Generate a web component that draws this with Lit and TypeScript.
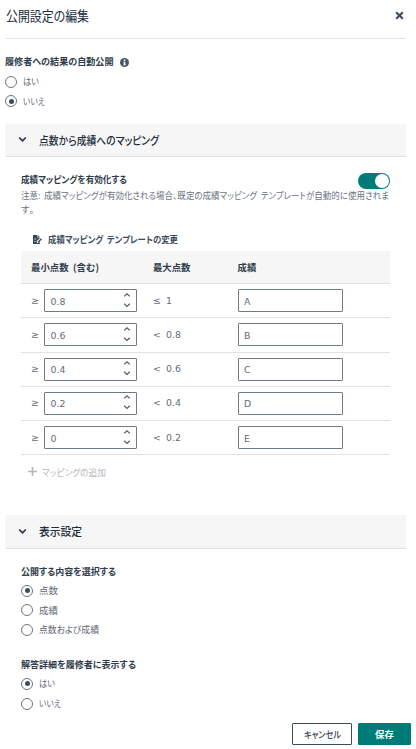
import { LitElement, html, css, svg } from "lit";
import { customElement, property, state } from "lit/decorators.js";
import { classMap } from "lit/directives/class-map.js";

/* A single line of text, condensed or tracked so that it fills a given width. */
@customElement("tracked-text")
class TrackedText extends LitElement {
  @property() text = "";
  @property({ type: Number }) span = 0;
  static styles = css`
    :host { display: block; white-space: pre; flex: none; }
    span { display: inline-block; transform-origin: 0 50%; word-spacing: 2px; }
  `;
  render() {
    return html`<span>${this.text}</span>`;
  }
  updated() {
    const el = this.renderRoot.querySelector("span")!;
    const natural = el.getBoundingClientRect().width;
    const count = [...this.text].length;
    this.style.width = `${this.span}px`;
    if (natural > this.span) el.style.transform = `scaleX(${this.span / natural})`;
    else el.style.letterSpacing = `${(this.span - natural) / count}px`;
  }
}

const t = (text: string, span: number) => html`<tracked-text .text=${text} .span=${span}></tracked-text>`;

@customElement("radio-option")
class RadioOption extends LitElement {
  @property() label = "";
  @property({ type: Number }) span = 0;
  @property({ type: Boolean }) checked = false;
  static styles = css`
    :host { display: flex; align-items: center; height: 100%; color: #5f6875; }
    .ring {
      box-sizing: border-box; width: 12px; height: 12px; margin-right: 6px; flex: none;
      border: 1px solid #6a7480; border-radius: 50%; background: #fff;
      display: grid; place-items: center;
    }
    .on::after { content: ""; width: 5px; height: 5px; border-radius: 50%; background: #394e60; }
    tracked-text { margin-bottom: 1px; }
  `;
  render() {
    return html`<span class=${classMap({ ring: true, on: this.checked })}></span>${t(this.label, this.span)}`;
  }
}

interface Band { min: string; op: string; max: string; grade: string; }

@customElement("app-root")
class AppRoot extends LitElement {
  @state() private bands: Band[] = [
    { min: "0.8", op: "≤", max: "1", grade: "A" },
    { min: "0.6", op: "<", max: "0.8", grade: "B" },
    { min: "0.4", op: "<", max: "0.6", grade: "C" },
    { min: "0.2", op: "<", max: "0.4", grade: "D" },
    { min: "0", op: "<", max: "0.2", grade: "E" },
  ];

  static styles = css`
    :host {
      display: block; box-sizing: border-box; width: 416px; height: 749px; overflow: hidden;
      background: #fff; color: #5f6b7b;
      font: 9.4px/14px "Noto Sans CJK JP", sans-serif;
      font-feature-settings: "palt";
    }
    svg { display: block; flex: none; }
    .bold { font-weight: 700; color: #2f3c4b; }
    .head {
      box-sizing: border-box; display: flex; justify-content: space-between; align-items: center;
      height: 39px; margin: 0 10px 0 5.5px; padding: 0 2px 6px 0; border-bottom: 1px solid #e1e2e4;
      font-size: 13.3px; color: #202d3c;
    }
    .head svg { margin-top: -2px; }
    .auto { padding: 14px 0 0 5px; height: 71px; box-sizing: border-box; }
    .line { display: flex; align-items: center; height: 19.5px; }
    .auto .bold { height: 19px; gap: 6px; }
    .auto .bold tracked-text { margin-bottom: 3px; }
    .section {
      box-sizing: border-box; display: flex; align-items: center; height: 33px; margin: 0 10px 0 5px;
      padding: 0 0 1px 13px; gap: 12px; background: #f6f6f6; border-bottom: 1px solid #e1e2e4;
      font-size: 11.6px; font-weight: 500; color: #202d3c;
    }
    .body { padding: 0 26px 0 21px; }
    .gap { height: 14px; }
    .body .gap { height: 12px; }
    .body .gap.wide { height: 15px; }
    .enable { display: flex; justify-content: space-between; margin-top: 15px; height: 16px; }
    .toggle {
      box-sizing: border-box; width: 32px; height: 16px; padding: 1px; border-radius: 8px; background: #007c78;
      display: flex; justify-content: flex-end; margin-top: 1px;
    }
    .knob { width: 14px; height: 14px; border-radius: 50%; background: #fff; }
    .note { line-height: 14px; color: #6b7482; height: 28px; }
    .change { height: 23px; margin-top: 12px; padding-left: 12px; display: flex; align-items: center; gap: 6px; }
    .change .bold { color: #3d4e60; margin-bottom: 1px; }
    .table { width: 369px; }
    .row {
      box-sizing: border-box; height: 34.25px; display: grid; grid-template-columns: 132px 84.5px 1fr;
      align-items: center; border-bottom: 1px solid #e1e2e4; font-family: "DejaVu Sans", sans-serif;
    }
    .row.th { height: 33px; background: #f6f6f6; font-family: inherit; }
    .th > * { margin-bottom: 1px; }
    .th > :first-child { margin-left: 10px; }
    .min { display: flex; align-items: center; padding-left: 10px; }
    .cmp { width: 13px; }
    .field {
      box-sizing: border-box; height: 23px; border: 1px solid #717b87; border-radius: 1px; background: #fff;
      display: flex; align-items: center; justify-content: space-between; padding: 2px 5px 0 5.5px;
    }
    .min .field { width: 93px; }
    .grade { width: 105px; }
    .field svg { margin-top: -4px; }
    .max { display: flex; }
    .add { display: flex; align-items: center; gap: 5px; height: 33px; padding-left: 7px; color: #b2b9c1; }
    .display { margin-top: 27px; height: 34px; }
    .body .line:last-child { height: 20.5px; }
    .foot { display: flex; justify-content: flex-end; gap: 6px; margin: 9px 5px 0 0; }
    .btn {
      box-sizing: border-box; height: 22px; border: 1px solid #3a4e60; border-radius: 1px;
      display: flex; align-items: center; justify-content: center; font-weight: 700;
    }
    .cancel { width: 60px; color: #33465a; font-weight: 500; }
    .save { width: 53px; border-color: #007c78; background: #007c78; color: #fff; }
  `;

  private chevron() {
    return html`<svg width="9" height="7" viewBox="0 0 9 7">
      ${svg`<path d="M1.2 1.5 4.5 4.8 7.8 1.5" fill="none" stroke="#263545" stroke-width="1.7"/>`}
    </svg>`;
  }

  private row(b: Band) {
    return html`<div class="row">
      <div class="min">
        <span class="cmp">≥</span>
        <div class="field">
          <span>${b.min}</span>
          <svg width="8" height="16" viewBox="0 0 8 16">
            <path d="M1.2 4.4 4 1.8 6.8 4.4M1.2 11.8 4 14.4 6.8 11.8" fill="none" stroke="#4f5b68" stroke-width="1.2"/>
          </svg>
        </div>
      </div>
      <div class="max"><span class="cmp">${b.op}</span><span>${b.max}</span></div>
      <div class="field grade"><span>${b.grade}</span></div>
    </div>`;
  }

  render() {
    return html`
      <div class="head">
        ${t("公開設定の編集", 83)}
        <svg width="9" height="9" viewBox="0 0 9 9"><path d="M1.2 1.2 7.8 7.8M7.8 1.2 1.2 7.8" stroke="#3a4c5e" stroke-width="2.1"/></svg>
      </div>
      <div class="auto">
        <div class="line bold">
          ${t("履修者への結果の自動公開", 108.5)}
          <svg width="9" height="9" viewBox="0 0 9 9">
            <circle cx="4.5" cy="4.5" r="4.5" fill="#4c5869"/>
            <path d="M3.8 1.6h1.5v1.3H3.8zM3.4 3.7h1.9v2.7h.5v.9H3.3v-.9h.5V4.6h-.4z" fill="#fff"/>
          </svg>
        </div>
        <div class="line"><radio-option label="はい" .span=${16}></radio-option></div>
        <div class="line"><radio-option label="いいえ" .span=${22} checked></radio-option></div>
      </div>
      <div class="gap"></div>
      <div class="section">${this.chevron()}${t("点数から成績へのマッピング", 120)}</div>
      <div class="body">
        <div class="enable">
          <span class="bold">${t("成績マッピングを有効化する", 106)}</span>
          <span class="toggle"><span class="knob"></span></span>
        </div>
        <div class="note">
          ${t("注意: 成績マッピングが有効化される場合、既定の成績マッピング テンプレートが自動的に使用されま", 368)}
          ${t("す。", 14)}
        </div>
        <div class="change">
          <svg width="9" height="9" viewBox="0 0 9 9">
            <path d="M0 0h4.4v2.5h2.4v.8L3.8 6v1.7h1.7l1.3-1.3V9H0z" fill="#34485a"/>
            <path d="M5 .2 6.7 1.9H5zM8 3.3l1 1-3 3H5v-1z" fill="#34485a"/>
            <path d="M1.3 4h2M1.3 6.4h1.4" stroke="#fff" stroke-width=".7"/>
          </svg>
          <span class="bold">${t("成績マッピング テンプレートの変更", 130)}</span>
        </div>
        <div class="table">
          <div class="row th bold">
            ${t("最小点数 (含む)", 68)}${t("最大点数", 37.5)}${t("成績", 19)}
          </div>
          ${this.bands.map((b) => this.row(b))}
        </div>
        <div class="add">
          <svg width="9" height="9" viewBox="0 0 9 9"><path d="M4.5 0v9M0 4.5h9" stroke="#b2b9c1" stroke-width="1.6"/></svg>
          ${t("マッピングの追加", 64)}
        </div>
      </div>
      <div class="section display">${this.chevron()}${t("表示設定", 43)}</div>
      <div class="body">
        <div class="gap"></div>
        <div class="line bold">${t("公開する内容を選択する", 95)}</div>
        <div class="line"><radio-option label="点数" .span=${19} checked></radio-option></div>
        <div class="line"><radio-option label="成績" .span=${19}></radio-option></div>
        <div class="line"><radio-option label="点数および成績" .span=${60}></radio-option></div>
        <div class="gap wide"></div>
        <div class="line bold">${t("解答詳細を履修者に表示する", 115)}</div>
        <div class="line"><radio-option label="はい" .span=${16} checked></radio-option></div>
        <div class="line"><radio-option label="いいえ" .span=${22}></radio-option></div>
      </div>
      <div class="foot">
        <div class="btn cancel">${t("キャンセル", 37)}</div>
        <div class="btn save">${t("保存", 19)}</div>
      </div>
    `;
  }
}
